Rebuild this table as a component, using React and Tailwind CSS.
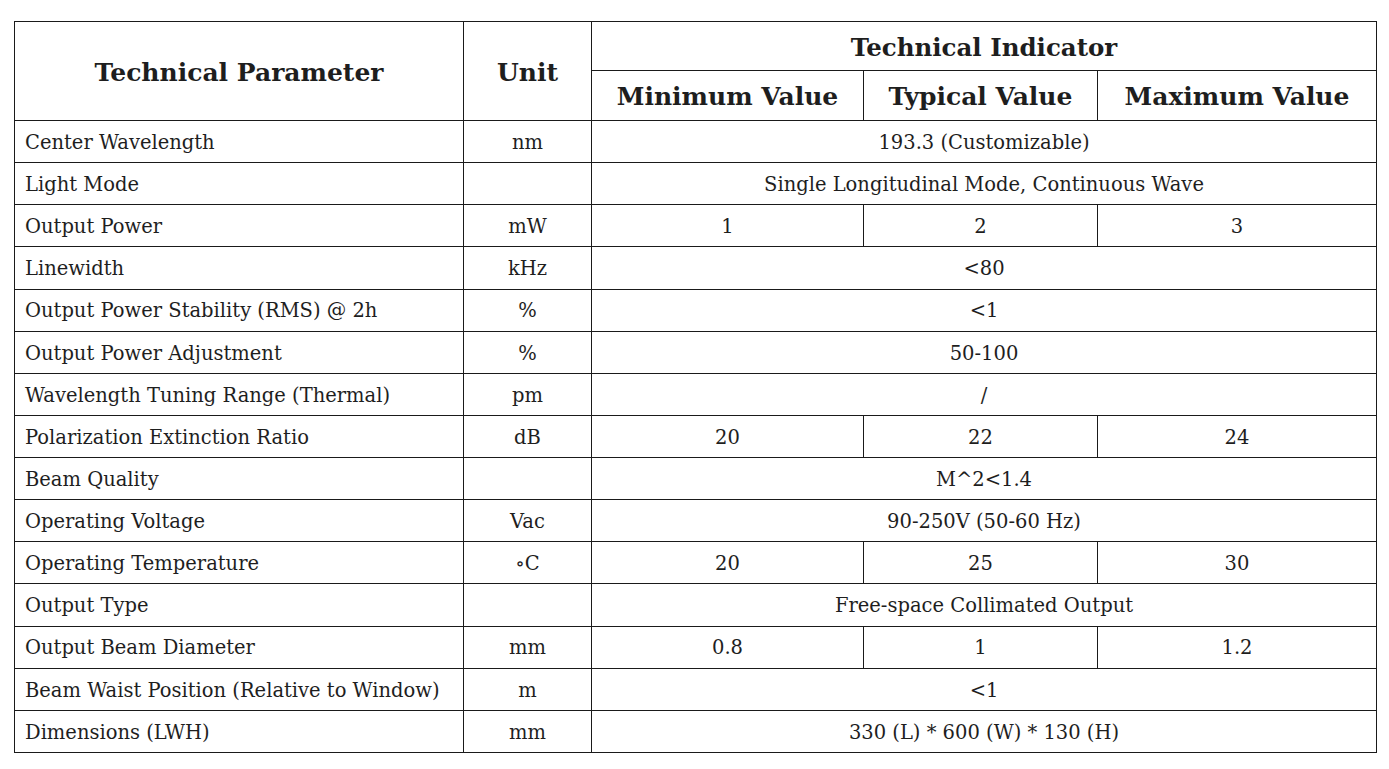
const rows = [
  { name: "Center Wavelength", unit: "nm", span: "193.3 (Customizable)" },
  { name: "Light Mode", unit: "", span: "Single Longitudinal Mode, Continuous Wave" },
  { name: "Output Power", unit: "mW", vals: ["1", "2", "3"] },
  { name: "Linewidth", unit: "kHz", span: "<80" },
  { name: "Output Power Stability (RMS) @ 2h", unit: "%", span: "<1" },
  { name: "Output Power Adjustment", unit: "%", span: "50-100" },
  { name: "Wavelength Tuning Range (Thermal)", unit: "pm", span: "/" },
  { name: "Polarization Extinction Ratio", unit: "dB", vals: ["20", "22", "24"] },
  { name: "Beam Quality", unit: "", span: "M^2<1.4" },
  { name: "Operating Voltage", unit: "Vac", span: "90-250V (50-60 Hz)" },
  { name: "Operating Temperature", unit: "\u2218C", vals: ["20", "25", "30"] },
  { name: "Output Type", unit: "", span: "Free-space Collimated Output" },
  { name: "Output Beam Diameter", unit: "mm", vals: ["0.8", "1", "1.2"] },
  { name: "Beam Waist Position (Relative to Window)", unit: "m", span: "<1" },
  { name: "Dimensions (LWH)", unit: "mm", span: "330 (L) * 600 (W) * 130 (H)" },
];

const cell = "border border-[#1a1a1a] p-0";

export default function App() {
  return (
    <div className="w-[1389px] h-[769px] bg-white pt-[21px] pl-[14px] text-[#1e1e1e] font-['DejaVu_Serif',serif]">
      <table className="border-collapse table-fixed w-[1362px]">
        <colgroup>
          <col className="w-[449px]" />
          <col className="w-[128px]" />
          <col className="w-[272px]" />
          <col className="w-[234px]" />
          <col className="w-[279px]" />
        </colgroup>
        <thead className="font-bold text-[25px]">
          <tr className="h-[49px]">
            <th rowSpan={2} className={`${cell} text-center pt-[3px]`}>Technical Parameter</th>
            <th rowSpan={2} className={`${cell} text-center pt-[3px]`}>Unit</th>
            <th colSpan={3} className={`${cell} text-center pt-[4px] text-[24.5px]`}>Technical Indicator</th>
          </tr>
          <tr className="h-[50px]">
            <th className={`${cell} text-center pt-[3px]`}>Minimum Value</th>
            <th className={`${cell} text-center pt-[3px]`}>Typical Value</th>
            <th className={`${cell} text-center pt-[3px]`}>Maximum Value</th>
          </tr>
        </thead>
        <tbody className="text-[19.5px]">
          {rows.map((r, i) => (
            <tr key={i} className="h-[42.13px]">
              <td className={`${cell} pl-[10px] pt-[2px] text-left`}>{r.name}</td>
              <td className={`${cell} pt-[2px] text-center`}>{r.unit}</td>
              {r.span ? (
                <td colSpan={3} className={`${cell} pt-[2px] text-center`}>{r.span}</td>
              ) : (
                r.vals.map((v, j) => (
                  <td key={j} className={`${cell} pt-[2px] text-center`}>{v}</td>
                ))
              )}
            </tr>
          ))}
        </tbody>
      </table>
    </div>
  );
}
